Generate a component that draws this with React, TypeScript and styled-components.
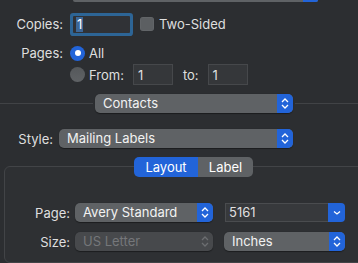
import * as React from "react";
import styled, { createGlobalStyle } from "styled-components";

const BLUE = "#2264d9";
const POPUP = "#5f6265";
const TEXT = "rgba(255,255,255,0.86)";

const GlobalStyle = createGlobalStyle`
  html, body {
    margin: 0;
    background: #2c2e31;
    font-family: Inter, "Noto Sans", "Liberation Sans", sans-serif;
    font-size: 13px;
    color: ${TEXT};
    overflow: hidden;
  }
`;

const Sheet = styled.div`
  width: 358px;
  height: 263px;
  overflow: hidden;
  display: flex;
  flex-direction: column;
`;

const TopStub = styled.div`
  margin-left: 73px;
  width: 245px;
  height: 2px;
  display: flex;
  border-radius: 0 0 4px 4px;
  overflow: hidden;
  background: ${POPUP};
  & > span {
    margin-left: auto;
    width: 15px;
    background: ${BLUE};
  }
`;

const Row = styled.div<{ $top: number; $h: number }>`
  display: flex;
  align-items: center;
  margin-top: ${(p) => p.$top}px;
  height: ${(p) => p.$h}px;
  flex-shrink: 0;
`;

const Label = styled.div<{ $w: number; $gap?: number }>`
  width: ${(p) => p.$w}px;
  margin-right: ${(p) => p.$gap ?? 7}px;
  text-align: right;
  white-space: nowrap;
  flex-shrink: 0;
`;

const FocusField = styled.div`
  margin: 0 3px;
  width: 57px;
  height: 17px;
  background: #303236;
  border-radius: 1px;
  box-shadow: 0 0 0 3px #2d6596;
  display: flex;
  align-items: center;
  padding-left: 3px;
  box-sizing: border-box;
  & > span {
    background: #3d6797;
    color: #fff;
    padding: 0 1px;
    line-height: 15px;
  }
`;

const Checkbox = styled.div`
  width: 14px;
  height: 14px;
  margin-left: 7px;
  margin-right: 5px;
  border-radius: 3px;
  background: #5c5f62;
  box-shadow: inset 0 0 0 0.5px rgba(255, 255, 255, 0.08);
`;

const Radio = styled.div<{ $on?: boolean }>`
  width: 15px;
  height: 15px;
  border-radius: 50%;
  box-sizing: border-box;
  margin-right: 4px;
  background: ${(p) => (p.$on ? BLUE : "linear-gradient(#55585b, #5f6265)")};
  display: flex;
  align-items: center;
  justify-content: center;
  &::after {
    content: "";
    display: ${(p) => (p.$on ? "block" : "none")};
    width: 6px;
    height: 6px;
    border-radius: 50%;
    background: #fff;
  }
`;

const NumField = styled.div<{ $ml: number }>`
  margin-left: ${(p) => p.$ml}px;
  width: 40px;
  height: 21px;
  box-sizing: border-box;
  background: #35373a;
  border: 1px solid #46484b;
  padding-left: 4px;
  display: flex;
  align-items: center;
`;

const Line = styled.div<{ $w?: number }>`
  height: 1px;
  background: #414346;
  ${(p) => (p.$w ? `width: ${p.$w}px;` : "flex: 1;")}
`;

const Popup = styled.div<{ $w: number; $disabled?: boolean; $ml?: number }>`
  width: ${(p) => p.$w}px;
  height: 19px;
  margin: 0 ${(p) => p.$ml ?? 0}px;
  flex-shrink: 0;
  display: flex;
  border-radius: 5px;
  overflow: hidden;
  background: ${(p) => (p.$disabled ? "#47494c" : POPUP)};
  color: ${(p) => (p.$disabled ? "#75777a" : "#f2f2f2")};
  box-shadow: 0 0.5px 1px rgba(0, 0, 0, 0.4);
`;

const PopupText = styled.div`
  flex: 1;
  padding-left: 8px;
  line-height: 19px;
  white-space: nowrap;
`;

const Arrows = styled.div<{ $disabled?: boolean }>`
  width: 16px;
  display: flex;
  align-items: center;
  justify-content: center;
  background: ${(p) => (p.$disabled ? "transparent" : BLUE)};
  color: ${(p) => (p.$disabled ? "#6c6e71" : "#fff")};
`;

const Combo = styled.div`
  margin-left: 12px;
  width: 120px;
  height: 19px;
  display: flex;
`;

const ComboField = styled.div`
  flex: 1;
  box-sizing: border-box;
  background: #37393c;
  border: 1px solid #4a4c4f;
  border-right: none;
  padding-left: 3px;
  line-height: 17px;
`;

const ComboButton = styled.div`
  width: 17px;
  border-radius: 0 4px 4px 0;
  background: ${BLUE};
  display: flex;
  align-items: center;
  justify-content: center;
  color: #fff;
`;

const Tabs = styled.div`
  display: flex;
  margin: 9px 0 0 134px;
  height: 20px;
  position: relative;
  z-index: 1;
  border-radius: 5px;
  overflow: hidden;
  align-self: flex-start;
`;

const Tab = styled.div<{ $active?: boolean; $w: number }>`
  width: ${(p) => p.$w}px;
  text-align: center;
  line-height: 20px;
  color: #fff;
  background: ${(p) => (p.$active ? BLUE : POPUP)};
`;

const GroupBox = styled.div`
  margin: -11px -20px 0 4px;
  flex: 1;
  border: 1px solid #424447;
  border-radius: 6px;
  background: #2e3033;
  padding-top: 36px;
  display: flex;
  flex-direction: column;
`;

const UpDown = () => (
  <svg width="16" height="19" viewBox="0 0 16 19" fill="none">
    <path d="M5 8 L8 5 L11 8" stroke="currentColor" strokeWidth="1.3" />
    <path d="M5 11 L8 14 L11 11" stroke="currentColor" strokeWidth="1.3" />
  </svg>
);

const Down = () => (
  <svg width="16" height="19" viewBox="0 0 16 19" fill="none">
    <path d="M5 8.5 L8 11 L11 8.5" stroke="currentColor" strokeWidth="1.3" />
  </svg>
);

export default function App() {
  return (
    <Sheet>
      <GlobalStyle />
      <TopStub>
        <span />
      </TopStub>

      <Row $top={11} $h={22}>
        <Label $w={63}>Copies:</Label>
        <FocusField>
          <span>1</span>
        </FocusField>
        <Checkbox />
        <span>Two-Sided</span>
      </Row>

      <Row $top={10} $h={16}>
        <Label $w={63}>Pages:</Label>
        <Radio $on />
        <span>All</span>
      </Row>

      <Row $top={3} $h={21}>
        <Label $w={63}></Label>
        <Radio />
        <span>From:</span>
        <NumField $ml={9}>1</NumField>
        <span style={{ marginLeft: 10 }}>to:</span>
        <NumField $ml={9}>1</NumField>
      </Row>

      <Row $top={9} $h={19}>
        <Line $w={93} />
        <Popup $w={198} $ml={2}>
          <PopupText>Contacts</PopupText>
          <Arrows>
            <UpDown />
          </Arrows>
        </Popup>
        <Line />
      </Row>

      <Row $top={16} $h={19}>
        <Label $w={53} $gap={6}>
          Style:
        </Label>
        <Popup $w={234}>
          <PopupText>Mailing Labels</PopupText>
          <Arrows>
            <UpDown />
          </Arrows>
        </Popup>
      </Row>

      <Tabs>
        <Tab $active $w={64}>
          Layout
        </Tab>
        <Tab $w={55}>Label</Tab>
      </Tabs>

      <GroupBox>
        <Row $top={0} $h={19}>
          <Label $w={65} $gap={5}>
            Page:
          </Label>
          <Popup $w={138}>
            <PopupText>Avery Standard</PopupText>
            <Arrows>
              <UpDown />
            </Arrows>
          </Popup>
          <Combo>
            <ComboField>5161</ComboField>
            <ComboButton>
              <Down />
            </ComboButton>
          </Combo>
        </Row>
        <Row $top={10} $h={19}>
          <Label $w={65} $gap={5}>
            Size:
          </Label>
          <Popup $w={138} $disabled>
            <PopupText>US Letter</PopupText>
            <Arrows $disabled>
              <UpDown />
            </Arrows>
          </Popup>
          <Popup $w={121} $ml={11}>
            <PopupText>Inches</PopupText>
            <Arrows>
              <UpDown />
            </Arrows>
          </Popup>
        </Row>
      </GroupBox>
    </Sheet>
  );
}
